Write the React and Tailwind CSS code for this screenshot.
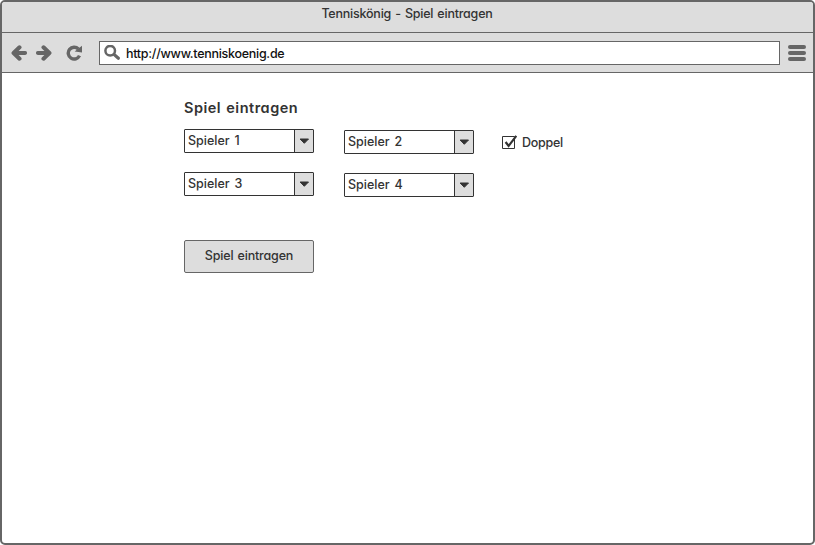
const chromeLine = 'border-[#666]';

function ArrowIcon({ className = '' }) {
  return (
    <svg width="16" height="16" viewBox="0 0 16 16" className={className}>
      <path d="M8.5 2.3 2.6 8l5.9 5.7M3 8h11" fill="none" stroke="#666" strokeWidth="4.1" strokeLinecap="round" strokeLinejoin="round" />
    </svg>
  );
}

function ReloadIcon() {
  return (
    <svg width="17" height="16" viewBox="0 0 17 16">
      <path d="M12.4 4A5.9 5.9 0 1 0 13.5 10.6" fill="none" stroke="#666" strokeWidth="3.4" />
      <path d="M16 .8V7.4L8.6 6.6Z" fill="#666" />
    </svg>
  );
}

function SearchIcon() {
  return (
    <svg width="17" height="16" viewBox="0 0 17 16" fill="none" stroke="#666">
      <circle cx="6.2" cy="5.7" r="4.8" strokeWidth="2.5" />
      <path d="m10 9.4 4.4 3.9" strokeWidth="3.2" strokeLinecap="round" />
    </svg>
  );
}

function Select({ label }) {
  return (
    <div className="flex h-6 w-[130px] rounded-[1px] border border-[#333] bg-white">
      <span className="flex-1 pl-[3px] text-[12.5px] font-medium leading-[21px] [word-spacing:1.5px]">{label}</span>
      <span className="flex w-[19px] items-center justify-center border-l border-[#333] bg-[#ddd]">
        <svg width="10" height="6" viewBox="0 0 10 6">
          <path d="M1.1 1h8.4L5.3 5.3Z" fill="#333" stroke="#333" strokeLinejoin="round" />
        </svg>
      </span>
    </div>
  );
}

export default function App() {
  return (
    <div className="h-[545px] w-[815px] overflow-hidden bg-white font-['Inter','Liberation_Sans',sans-serif] text-[12.5px] font-medium text-[#333] [font-feature-settings:'cv11'_1]">
      <div className={`flex h-full flex-col overflow-hidden rounded-[5px] border-2 bg-white ${chromeLine}`}>
        <header className={`h-[31px] border-b bg-[#ddd] text-center ${chromeLine}`}>
          <span className="block pr-px leading-[23px] tracking-[-0.22px] [word-spacing:1px]">Tenniskönig - Spiel eintragen</span>
        </header>
        <nav className={`flex h-10 items-center border-b bg-[#ddd] pl-[9px] pr-[7px] ${chromeLine}`}>
          <ArrowIcon />
          <ArrowIcon className="ml-[9px] rotate-180" />
          <span className="ml-[14px]"><ReloadIcon /></span>
          <div className={`ml-4 flex h-6 w-[681px] shrink-0 items-center border bg-white pl-1 ${chromeLine}`}>
            <SearchIcon />
            <span className="ml-[5px] pt-[2px] leading-[20px] tracking-[-0.28px] text-[#111]">http://www.tenniskoenig.de</span>
          </div>
          <div className="ml-[7.5px] flex w-[18px] shrink-0 flex-col gap-[2px]">
            <span className="h-1 rounded-full bg-[#666]" />
            <span className="h-1 rounded-full bg-[#666]" />
            <span className="h-1 rounded-full bg-[#666]" />
          </div>
        </nav>
        <main className="pl-[182px] pt-[24px]">
          <h1 className="h-8 pt-px text-[14.5px] font-semibold leading-[20px] tracking-[0.5px] [word-spacing:1px]"><span>Spiel eintragen</span></h1>
          <div className="flex gap-[30px]">
            <div className="flex flex-col gap-[19px]">
              <Select label="Spieler 1" />
              <Select label="Spieler 3" />
            </div>
            <div className="flex flex-col gap-[19px] pt-px">
              <Select label="Spieler 2" />
              <Select label="Spieler 4" />
            </div>
            <label className="-ml-[2px] flex h-[26px] items-center">
              <svg width="16" height="16" viewBox="0 0 16 16" fill="none" stroke="#333">
                <path d="M.5 2.5h12v12h-12Z" fill="#fff" />
                <path d="m3.6 8 3 4L14.3 1.8" strokeWidth="2.2" />
              </svg>
              <span className="ml-1 pt-[2px] tracking-[-0.25px]">Doppel</span>
            </label>
          </div>
          <button className="mt-[43px] block h-[33px] w-[130px] rounded-[2px] border border-[#666] bg-[#ddd] pb-[2px] leading-[28px] tracking-[-0.18px] [word-spacing:1px]"><span>Spiel eintragen</span></button>
        </main>
      </div>
    </div>
  );
}
